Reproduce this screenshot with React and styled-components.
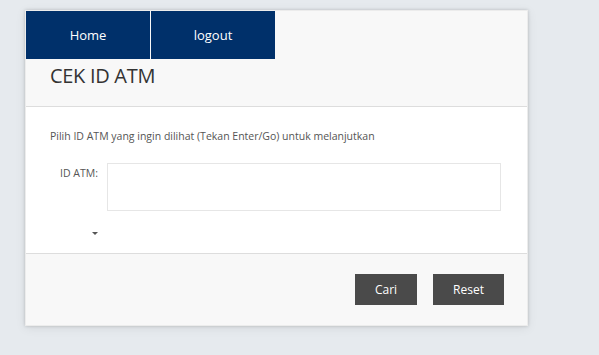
import React from 'react'
import styled, { createGlobalStyle } from 'styled-components'

const Global = createGlobalStyle`
  body {
    margin: 0;
    background: #e6eaee;
    font-family: "Open Sans", "Liberation Sans", sans-serif;
  }
`

function App() {
  return (
    <>
      <Global />
      <Page>
        <Card>
          <Nav>
            <Tab>Home</Tab>
            <Tab>logout</Tab>
          </Nav>
          <Header>
            <h1>CEK ID ATM</h1>
          </Header>

          <Body>
            <p>Pilih ID ATM yang ingin dilihat (Tekan Enter/Go) untuk melanjutkan</p>
            <Row>
              <label>ID ATM:</label>
              <Field />
            </Row>
            <Caret />
          </Body>

          <Footer>
            <Button $w={62}>Cari</Button>
            <Button $w={71}>Reset</Button>
          </Footer>
        </Card>
      </Page>
    </>
  )
}

export default App

const Page = styled.div`
  padding: 10px 0 0 25px;
  height: 345px;
`

const Card = styled.div`
  width: 503px;
  background: #f8f8f8;
  box-shadow: 0 0 3px rgba(0, 0, 0, 0.18), 0 2px 10px rgba(0, 0, 0, 0.08);
  border: 1px solid #ececec;
  box-sizing: border-box;
`

const Nav = styled.div`
  display: flex;
  gap: 1px;
`

const Tab = styled.a`
  display: flex;
  align-items: center;
  justify-content: center;
  width: 124px;
  height: 48px;
  background: #00306a;
  color: #ffffff;
  font-size: 13px;
`

const Header = styled.div`
  height: 47px;
  padding: 0 24px;
  border-bottom: 1px solid #dddddd;

  h1 {
    margin: 0;
    padding-top: 3px;
    font-size: 20px;
    font-weight: 400;
    color: #333333;
    letter-spacing: -0.3px;
  }
`

const Body = styled.div`
  background: #ffffff;
  height: 146px;
  padding: 22px 24px 0;
  box-sizing: border-box;

  p {
    margin: 0;
    font-size: 10.5px;
    color: #555555;
  }
`

const Row = styled.div`
  display: flex;
  align-items: flex-start;
  margin-top: 20px;

  label {
    width: 48px;
    text-align: right;
    padding-top: 3px;
    font-size: 10.5px;
    color: #555555;
  }
`

const Field = styled.div`
  margin-left: 9px;
  width: 394px;
  height: 48px;
  border: 1px solid #e6e6e6;
  box-sizing: border-box;
`

const Caret = styled.div`
  margin: 21px 0 0 42px;
  width: 0;
  height: 0;
  border-left: 3px solid transparent;
  border-right: 3px solid transparent;
  border-top: 3px solid #555555;
`

const Footer = styled.div`
  display: flex;
  justify-content: flex-end;
  gap: 16px;
  height: 72px;
  padding: 20px 23px 0 0;
  box-sizing: border-box;
  border-top: 1px solid #dddddd;
`

const Button = styled.button`
  width: ${(p) => p.$w}px;
  height: 31px;
  border: none;
  background: #4a4a4a;
  color: #ffffff;
  font-family: "Open Sans", "Liberation Sans", sans-serif;
  font-size: 12px;
  padding: 0;
`
